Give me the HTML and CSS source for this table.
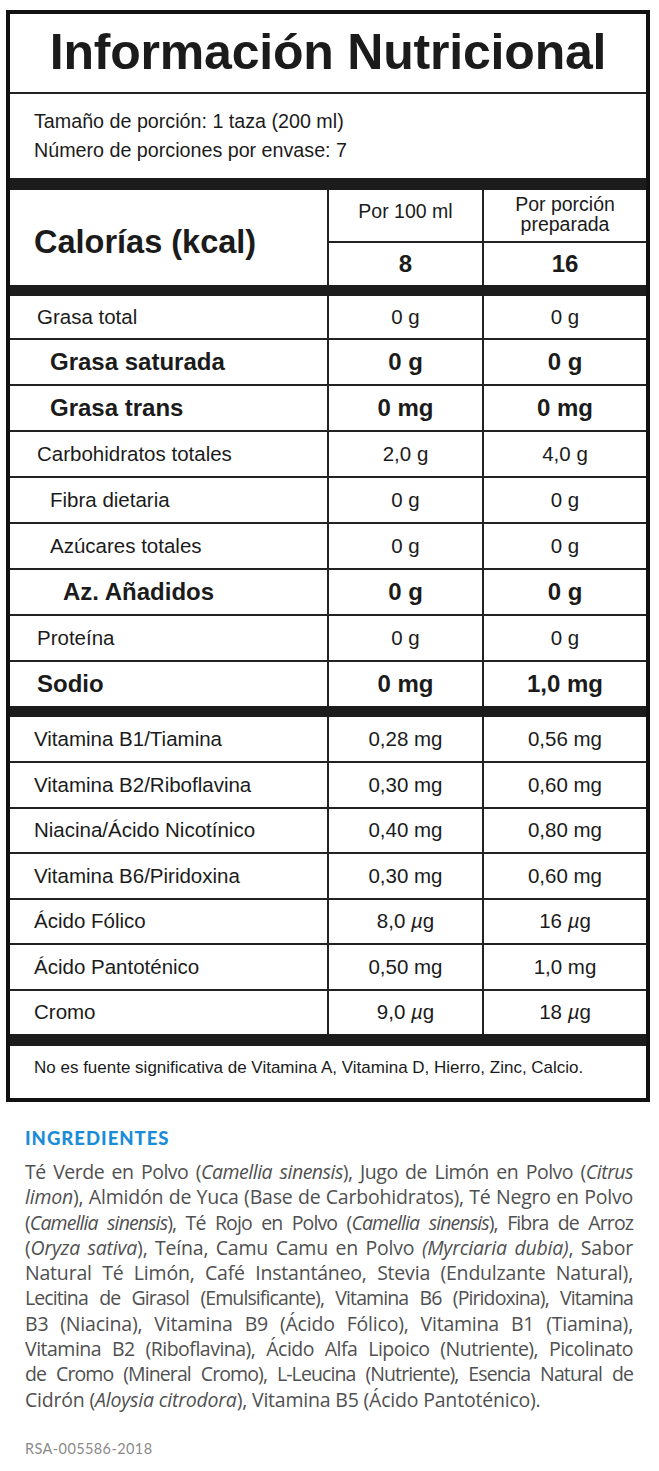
FILE: index.html
```html
<!DOCTYPE html>
<html lang="es">
<head>
<meta charset="utf-8">
<title>Información Nutricional</title>
<link rel="stylesheet" href="styles.css">
</head>
<body>
<div class="label">
  <div class="title">Información Nutricional</div>
  <div class="serving">
    <div>Tamaño de porción: 1 taza (200 ml)</div>
    <div>Número de porciones por envase: 7</div>
  </div>
  <div class="bar"></div>
  <div class="cal">
    <div class="cal-name">Calorías (kcal)</div>
    <div class="cal-head cal-head-1">Por 100 ml</div>
    <div class="cal-head">Por porción<br>preparada</div>
    <div class="cal-val">8</div>
    <div class="cal-val">16</div>
  </div>
  <div class="bar bar-thin"></div>
  <div class="rows">
    <div class="row"><div class="name ind-1">Grasa total</div><div class="val">0 g</div><div class="val">0 g</div></div>
    <div class="row bold"><div class="name ind-2">Grasa saturada</div><div class="val">0 g</div><div class="val">0 g</div></div>
    <div class="row bold"><div class="name ind-2">Grasa trans</div><div class="val">0 mg</div><div class="val">0 mg</div></div>
    <div class="row"><div class="name ind-1">Carbohidratos totales</div><div class="val">2,0 g</div><div class="val">4,0 g</div></div>
    <div class="row"><div class="name ind-2">Fibra dietaria</div><div class="val">0 g</div><div class="val">0 g</div></div>
    <div class="row"><div class="name ind-2">Azúcares totales</div><div class="val">0 g</div><div class="val">0 g</div></div>
    <div class="row bold"><div class="name ind-3">Az. Añadidos</div><div class="val">0 g</div><div class="val">0 g</div></div>
    <div class="row"><div class="name ind-1">Proteína</div><div class="val">0 g</div><div class="val">0 g</div></div>
    <div class="row bold"><div class="name ind-1">Sodio</div><div class="val">0 mg</div><div class="val">1,0 mg</div></div>
  </div>
  <div class="bar bar-thin"></div>
  <div class="rows vits">
    <div class="row"><div class="name ind-0">Vitamina B1/Tiamina</div><div class="val">0,28 mg</div><div class="val">0,56 mg</div></div>
    <div class="row"><div class="name ind-0">Vitamina B2/Riboflavina</div><div class="val">0,30 mg</div><div class="val">0,60 mg</div></div>
    <div class="row"><div class="name ind-0">Niacina/Ácido Nicotínico</div><div class="val">0,40 mg</div><div class="val">0,80 mg</div></div>
    <div class="row"><div class="name ind-0">Vitamina B6/Piridoxina</div><div class="val">0,30 mg</div><div class="val">0,60 mg</div></div>
    <div class="row"><div class="name ind-0">Ácido Fólico</div><div class="val">8,0 <i>µ</i>g</div><div class="val">16 <i>µ</i>g</div></div>
    <div class="row"><div class="name ind-0">Ácido Pantoténico</div><div class="val">0,50 mg</div><div class="val">1,0 mg</div></div>
    <div class="row"><div class="name ind-0">Cromo</div><div class="val">9,0 <i>µ</i>g</div><div class="val">18 <i>µ</i>g</div></div>
  </div>
  <div class="bar"></div>
  <div class="note">No es fuente significativa de Vitamina A, Vitamina D, Hierro, Zinc, Calcio.</div>
</div>

<div class="ingredients">
  <div class="ing-title">INGREDIENTES</div>
  <div class="ing-text">
    <span class="ln snug">Té Verde en Polvo (<i>Camellia sinensis</i>), Jugo de Limón en Polvo (<i>Citrus</i></span>
    <span class="ln"><i>limon</i>), Almidón de Yuca (Base de Carbohidratos), Té Negro en Polvo</span>
    <span class="ln tight">(<i>Camellia sinensis</i>), Té Rojo en Polvo (<i>Camellia sinensis</i>), Fibra de Arroz</span>
    <span class="ln">(<i>Oryza sativa</i>), Teína, Camu Camu en Polvo <i>(Myrciaria dubia)</i>, Sabor</span>
    <span class="ln">Natural Té Limón, Café Instantáneo, Stevia (Endulzante Natural),</span>
    <span class="ln tight">Lecitina de Girasol (Emulsificante), Vitamina B6 (Piridoxina), Vitamina</span>
    <span class="ln">B3 (Niacina), Vitamina B9 (Ácido Fólico), Vitamina B1 (Tiamina),</span>
    <span class="ln snug">Vitamina B2 (Riboflavina), Ácido Alfa Lipoico (Nutriente), Picolinato</span>
    <span class="ln tight">de Cromo (Mineral Cromo), L-Leucina (Nutriente), Esencia Natural de</span>
    <span class="ln last">Cidrón (<i>Aloysia citrodora</i>), Vitamina B5 (Ácido Pantoténico).</span>
  </div>
  <div class="rsa">RSA-005586-2018</div>
</div>
</body>
</html>
```

FILE: styles.css
```css
* { box-sizing: border-box; }

body {
  margin: 0;
  background: #ffffff;
  font-family: "Liberation Sans", Arial, sans-serif;
  color: #1b1b1b;
}

.label {
  width: 644px;
  margin: 10px 0 0 6px;
  border: 4px solid #111111;
}

.title {
  height: 80px;
  border-bottom: 2px solid #222222;
  display: flex;
  align-items: center;
  justify-content: center;
  font-weight: 700;
  font-size: 50px;
  line-height: 1.15;
  letter-spacing: -0.2px;
}

.serving {
  height: 84px;
  padding: 12.6px 0 0 24px;
  font-size: 19.7px;
  line-height: 29px;
}

.bar {
  height: 12px;
  background: #1c1c1c;
}

.bar-thin {
  height: 11px;
}

.cal {
  display: grid;
  grid-template-columns: 317px 155px 164px;
  grid-template-rows: 51px 44px;
}

.cal-name {
  grid-row: 1 / span 2;
  display: flex;
  align-items: center;
  padding: 10px 0 0 24px;
  font-weight: 700;
  font-size: 32.5px;
}

.cal-head {
  border-left: 2px solid #222222;
  display: flex;
  align-items: center;
  justify-content: center;
  text-align: center;
  font-size: 19.5px;
  line-height: 20px;
  padding-bottom: 4px;
}

.cal-head-1 {
  padding-bottom: 9px;
}

.cal-val {
  border-left: 2px solid #222222;
  border-top: 2px solid #222222;
  display: flex;
  align-items: center;
  justify-content: center;
  font-weight: 700;
  font-size: 24px;
}

.row {
  display: grid;
  grid-template-columns: 317px 155px 164px;
  height: 46px;
  border-top: 2px solid #222222;
  font-size: 20.5px;
}

.row:first-child {
  border-top: 0;
  height: 42px;
}

.vits .row {
  height: 45.5px;
}

.vits .row:first-child {
  height: 44px;
}

.row.bold {
  font-weight: 700;
  font-size: 24px;
}

.name {
  display: flex;
  align-items: center;
  white-space: nowrap;
}

.ind-0 { padding-left: 24px; }
.ind-1 { padding-left: 27px; }
.ind-2 { padding-left: 40px; }
.ind-3 { padding-left: 53px; }

.val {
  border-left: 2px solid #222222;
  display: flex;
  align-items: center;
  justify-content: center;
  white-space: pre;
}

.note {
  height: 52px;
  display: flex;
  align-items: center;
  padding: 0 0 8px 24px;
  font-size: 17px;
}

.ingredients {
  padding: 0 26px 0 25px;
  margin-top: 26px;
}

.ing-title {
  color: #1a8cd8;
  font-family: Lato, "Liberation Sans", sans-serif;
  font-weight: 900;
  font-size: 18.5px;
  line-height: 20px;
  letter-spacing: 1px;
}

.ing-text {
  margin-top: 11px;
  font-family: "Open Sans", "Liberation Sans", sans-serif;
  font-size: 19.5px;
  line-height: 25.3px;
  color: #505050;
  letter-spacing: -0.2px;
}

.ln {
  display: block;
  text-align: justify;
  text-align-last: justify;
}

.ln.snug {
  letter-spacing: -0.5px;
}

.ln.tight {
  letter-spacing: -0.9px;
}

.ln.last {
  text-align-last: left;
}

.rsa {
  margin-top: 27px;
  font-family: Lato, "Liberation Sans", sans-serif;
  font-size: 14.5px;
  line-height: 20px;
  color: #8a8a8a;
  letter-spacing: 0.4px;
}
```
